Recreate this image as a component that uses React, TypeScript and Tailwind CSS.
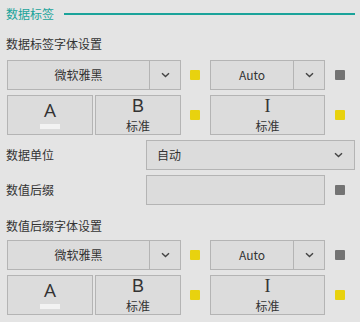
const font = { fontFamily: '"Noto Sans CJK SC", "Noto Sans", sans-serif' };

function Chevron() {
  return (
    <svg width="9" height="6" viewBox="0 0 9 6" className="text-[#444]">
      <path d="M1 1.2 L4.5 4.6 L8 1.2" fill="none" stroke="currentColor" strokeWidth="1.4" />
    </svg>
  );
}

function Dot({ on }: { on?: boolean }) {
  return (
    <div
      className={
        "h-[10px] w-[10px] shrink-0 rounded-[1px] " +
        (on ? "bg-[#e8d20f]" : "bg-[#737373]")
      }
    />
  );
}

function Select({ value, width, arrow }: { value: string; width: string; arrow: string }) {
  return (
    <div className={"flex h-[30px] shrink-0 border border-[#b4b4b4] bg-[#dcdcdc] " + width}>
      <div className="flex flex-1 items-center justify-center text-[12px] text-[#333]">{value}</div>
      <div className={"flex items-center justify-center border-l border-[#b4b4b4] " + arrow}>
        <Chevron />
      </div>
    </div>
  );
}

function StyleButton({ children, width }: { children: React.ReactNode; width: string }) {
  return (
    <div
      className={
        "flex h-[40px] shrink-0 flex-col items-center justify-center border border-[#b4b4b4] bg-[#dcdcdc] text-[#333] " +
        width
      }
    >
      {children}
    </div>
  );
}

function FontRows() {
  return (
    <>
      <div className="flex items-center pl-[7px]">
        <Select value="微软雅黑" width="w-[174px]" arrow="w-[31px]" />
        <div className="ml-[9px]">
          <Dot on />
        </div>
        <div className="ml-[10px]">
          <Select value="Auto" width="w-[115px]" arrow="w-[31px]" />
        </div>
        <div className="ml-[10px]">
          <Dot />
        </div>
      </div>
      <div className="mt-[5px] flex items-center pl-[7px]">
        <StyleButton width="w-[86px]">
          <span className="text-[19px] leading-[19px]" style={{ fontFamily: '"Open Sans", sans-serif' }}>
            A
          </span>
          <span className="mt-[4px] h-[5px] w-[20px] bg-[#f2f2f2]" />
        </StyleButton>
        <div className="ml-[2px]">
          <StyleButton width="w-[86px]">
            <span className="text-[18px] leading-[21px]" style={{ fontFamily: '"Liberation Sans", sans-serif' }}>
              B
            </span>
            <span className="text-[12px] leading-[17px]">标准</span>
          </StyleButton>
        </div>
        <div className="ml-[9px]">
          <Dot on />
        </div>
        <div className="ml-[10px]">
          <StyleButton width="w-[115px]">
            <span className="text-[18px] leading-[21px]" style={{ fontFamily: '"Liberation Serif", serif' }}>
              I
            </span>
            <span className="text-[12px] leading-[17px]">标准</span>
          </StyleButton>
        </div>
        <div className="ml-[10px]">
          <Dot on />
        </div>
      </div>
    </>
  );
}

export default function App() {
  return (
    <div className="h-[322px] w-[360px] overflow-hidden bg-[#e4e4e4] text-[#333]" style={font}>
      <div className="flex h-[28px] items-center pl-[6px] pr-[5px]">
        <span className="text-[12px] text-[#1aa39a]">数据标签</span>
        <div className="ml-[10px] h-[2px] flex-1 bg-[#1aa39a]" />
      </div>
      <div className="flex h-[32px] items-center pl-[6px] text-[12px]">数据标签字体设置</div>
      <FontRows />
      <div className="mt-[5px] flex items-center pl-[6px]">
        <div className="w-[140px] text-[12px]">数据单位</div>
        <div className="flex h-[30px] w-[209px] items-center justify-between border border-[#b4b4b4] bg-[#dcdcdc] pl-[10px] pr-[11px]">
          <span className="text-[12px]">自动</span>
          <Chevron />
        </div>
      </div>
      <div className="mt-[5px] flex items-center pl-[6px]">
        <div className="w-[140px] text-[12px]">数值后缀</div>
        <div className="h-[30px] w-[179px] border border-[#b4b4b4] bg-[#dcdcdc]" />
        <div className="ml-[10px]">
          <Dot />
        </div>
      </div>
      <div className="flex h-[35px] items-center pl-[6px] pt-[7px] text-[12px]">数值后缀字体设置</div>
      <FontRows />
    </div>
  );
}
